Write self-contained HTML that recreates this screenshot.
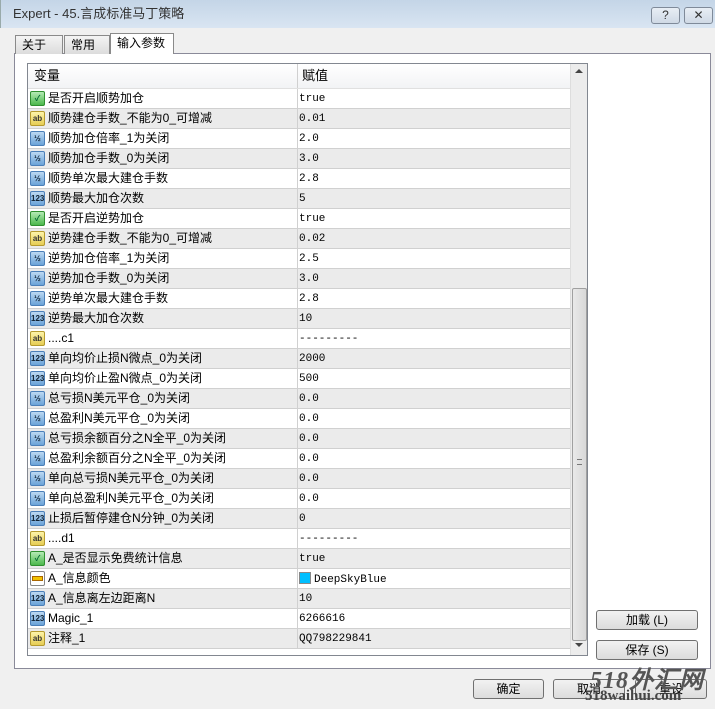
<!DOCTYPE html><html><head><meta charset="utf-8"><style>
*{box-sizing:border-box;margin:0;padding:0}
body{width:715px;height:709px;background:#f0f0f0;font-family:"Liberation Sans","Noto Sans CJK SC",sans-serif;font-size:12px;color:#000;position:relative;overflow:hidden}
.title{position:absolute;left:0;top:0;width:715px;height:28px;background:linear-gradient(#c4d5e7,#d9e5f2);border-left:1px solid #9aa;}
.title span{position:absolute;left:12px;top:6px;font-size:13px;line-height:16px;color:#333}
.tb{position:absolute;top:7px;width:29px;height:17px;border:1px solid #7f8a99;border-radius:3px;background:linear-gradient(#e8eef5,#cfd9e5);text-align:center;font-size:12px;line-height:15px;color:#333}
.tab{position:absolute;top:35px;height:19px;border:1px solid #8a8a8a;border-bottom:none;background:linear-gradient(#f4f4f4,#dcdcdc);padding:1px 6px;font-size:12px;line-height:16px}
.panel{position:absolute;left:14px;top:53px;width:697px;height:616px;border:1px solid #8a8a99;background:#fff}
.list{position:absolute;left:27px;top:63px;width:561px;height:593px;border:1px solid #828790;background:#fff;overflow:hidden}
.hdr{position:absolute;left:0;top:0;width:542px;height:25px;background:linear-gradient(#fff,#f2f3f5);border-bottom:1px solid #e0e0e0}
.hdr span{position:absolute;top:4px;font-size:13px;line-height:16px}
.row{position:absolute;left:0;width:542px;height:20px;border-bottom:1px solid #d0d0d0}
.row.g{background:#ebebeb}
.n{position:absolute;left:20px;top:2px;font-size:12px;line-height:15px}
.v{position:absolute;left:271px;top:3px;font-family:"Liberation Mono","DejaVu Sans Mono",monospace;font-size:11px;line-height:14px}
.sep{position:absolute;left:269px;top:0;width:1px;height:100%;background:#d0d0d0}
.ic{position:absolute;left:2px;top:2px;width:15px;height:15px;border-radius:2px;font-size:8px;font-weight:bold;text-align:center;line-height:13px}
.b{background:linear-gradient(#bcd8f2,#6aa3d8);border:1px solid #4b7fb8;color:#123}
.a{background:linear-gradient(#fdf3a8,#e6cc54);border:1px solid #b59a2e;color:#333}
.k{background:linear-gradient(#b4eab4,#4cb84c);border:1px solid #2f8f2f;color:#063}
.sb{position:absolute;left:542px;top:0;width:17px;height:591px;background:#ececec;border-left:1px solid #ddd}
.thumb{position:absolute;left:1px;top:224px;width:15px;height:353px;background:linear-gradient(90deg,#e9e9e9,#d8d8d8);border:1px solid #a0a0a0;border-radius:2px}
.btn{position:absolute;height:20px;border:1px solid #707070;border-radius:3px;background:linear-gradient(#f2f2f2,#dcdcdc);text-align:center;line-height:18px;font-size:12px}
</style></head><body>
<div class="title"><span>Expert - 45.言成标准马丁策略</span></div>
<div class="tb" style="left:651px">?</div><div class="tb" style="left:684px">✕</div>
<div class="panel"></div>
<div class="tab" style="left:15px;width:48px;">关于</div>
<div class="tab" style="left:64px;width:46px;">常用</div>
<div class="tab" style="left:110px;top:33px;height:21px;width:64px;background:#fff;">输入参数</div>
<div class="list">
<div class="hdr"><span style="left:6px">变量</span><span style="left:274px">赋值</span><div class="sep"></div></div>
<div id="rows"></div>
<div class="sb"><div style="position:absolute;left:4px;top:5px;border:4px solid transparent;border-bottom:4px solid #444;border-top:none;width:0"></div><div class="thumb"><div style="position:absolute;left:4px;top:170px;width:5px;height:6px;border-top:1px solid #777;border-bottom:1px solid #777"></div></div><div style="position:absolute;left:4px;top:579px;border:4px solid transparent;border-top:4px solid #444;border-bottom:none;width:0"></div></div>
</div>
<div class="btn" style="left:596px;top:610px;width:102px">加载 (L)</div>
<div class="btn" style="left:596px;top:640px;width:102px">保存 (S)</div>
<div class="btn" style="left:473px;top:679px;width:71px">确定</div>
<div class="btn" style="left:553px;top:679px;width:72px">取消</div>
<div class="btn" style="left:635px;top:679px;width:72px">重设</div>
<div style="position:absolute;left:590px;top:660px;font:italic bold 24px 'Liberation Serif',serif;color:#555;letter-spacing:1px">518外汇网</div>
<div style="position:absolute;left:585px;top:688px;font:bold 15px 'Liberation Serif',serif;color:#444">518waihui.com</div>
<script>
var d=[["k","是否开启顺势加仓","true"],["a","顺势建仓手数_不能为0_可增减","0.01"],["b","顺势加仓倍率_1为关闭","2.0"],["b","顺势加仓手数_0为关闭","3.0"],["b","顺势单次最大建仓手数","2.8"],["c","顺势最大加仓次数","5"],["k","是否开启逆势加仓","true"],["a","逆势建仓手数_不能为0_可增减","0.02"],["b","逆势加仓倍率_1为关闭","2.5"],["b","逆势加仓手数_0为关闭","3.0"],["b","逆势单次最大建仓手数","2.8"],["c","逆势最大加仓次数","10"],["a","....c1","---------"],["c","单向均价止损N微点_0为关闭","2000"],["c","单向均价止盈N微点_0为关闭","500"],["b","总亏损N美元平仓_0为关闭","0.0"],["b","总盈利N美元平仓_0为关闭","0.0"],["b","总亏损余额百分之N全平_0为关闭","0.0"],["b","总盈利余额百分之N全平_0为关闭","0.0"],["b","单向总亏损N美元平仓_0为关闭","0.0"],["b","单向总盈利N美元平仓_0为关闭","0.0"],["c","止损后暂停建仓N分钟_0为关闭","0"],["a","....d1","---------"],["k","A_是否显示免费统计信息","true"],["x","A_信息颜色","DeepSkyBlue"],["c","A_信息离左边距离N","10"],["c","Magic_1","6266616"],["a","注释_1","QQ798229841"]];
var h="";d.forEach(function(r,i){var cls=r[0]=="a"?"a":r[0]=="k"?"k":"b";var t=r[0]=="a"?"ab":r[0]=="k"?"✓":r[0]=="c"?"123":r[0]=="x"?"":"½";
var ic=r[0]=="x"?'<div class="ic" style="background:#fff;border:1px solid #888"><div style="margin:4px 1px;height:5px;background:#f2c200;border:1px solid #a60"></div></div>':'<div class="ic '+cls+'">'+t+'</div>';
var v=r[0]=="x"?'<span style="display:inline-block;width:12px;height:12px;background:#00bfff;border:1px solid #888;vertical-align:-2px;margin-right:3px"></span>'+r[2]:r[2];
h+='<div class="row'+(i%2?' g':'')+'" style="top:'+(25+i*20)+'px">'+ic+'<span class="n">'+r[1]+'</span><div class="sep"></div><span class="v">'+v+'</span></div>';});
document.getElementById("rows").innerHTML=h;
</script>
</body></html>
